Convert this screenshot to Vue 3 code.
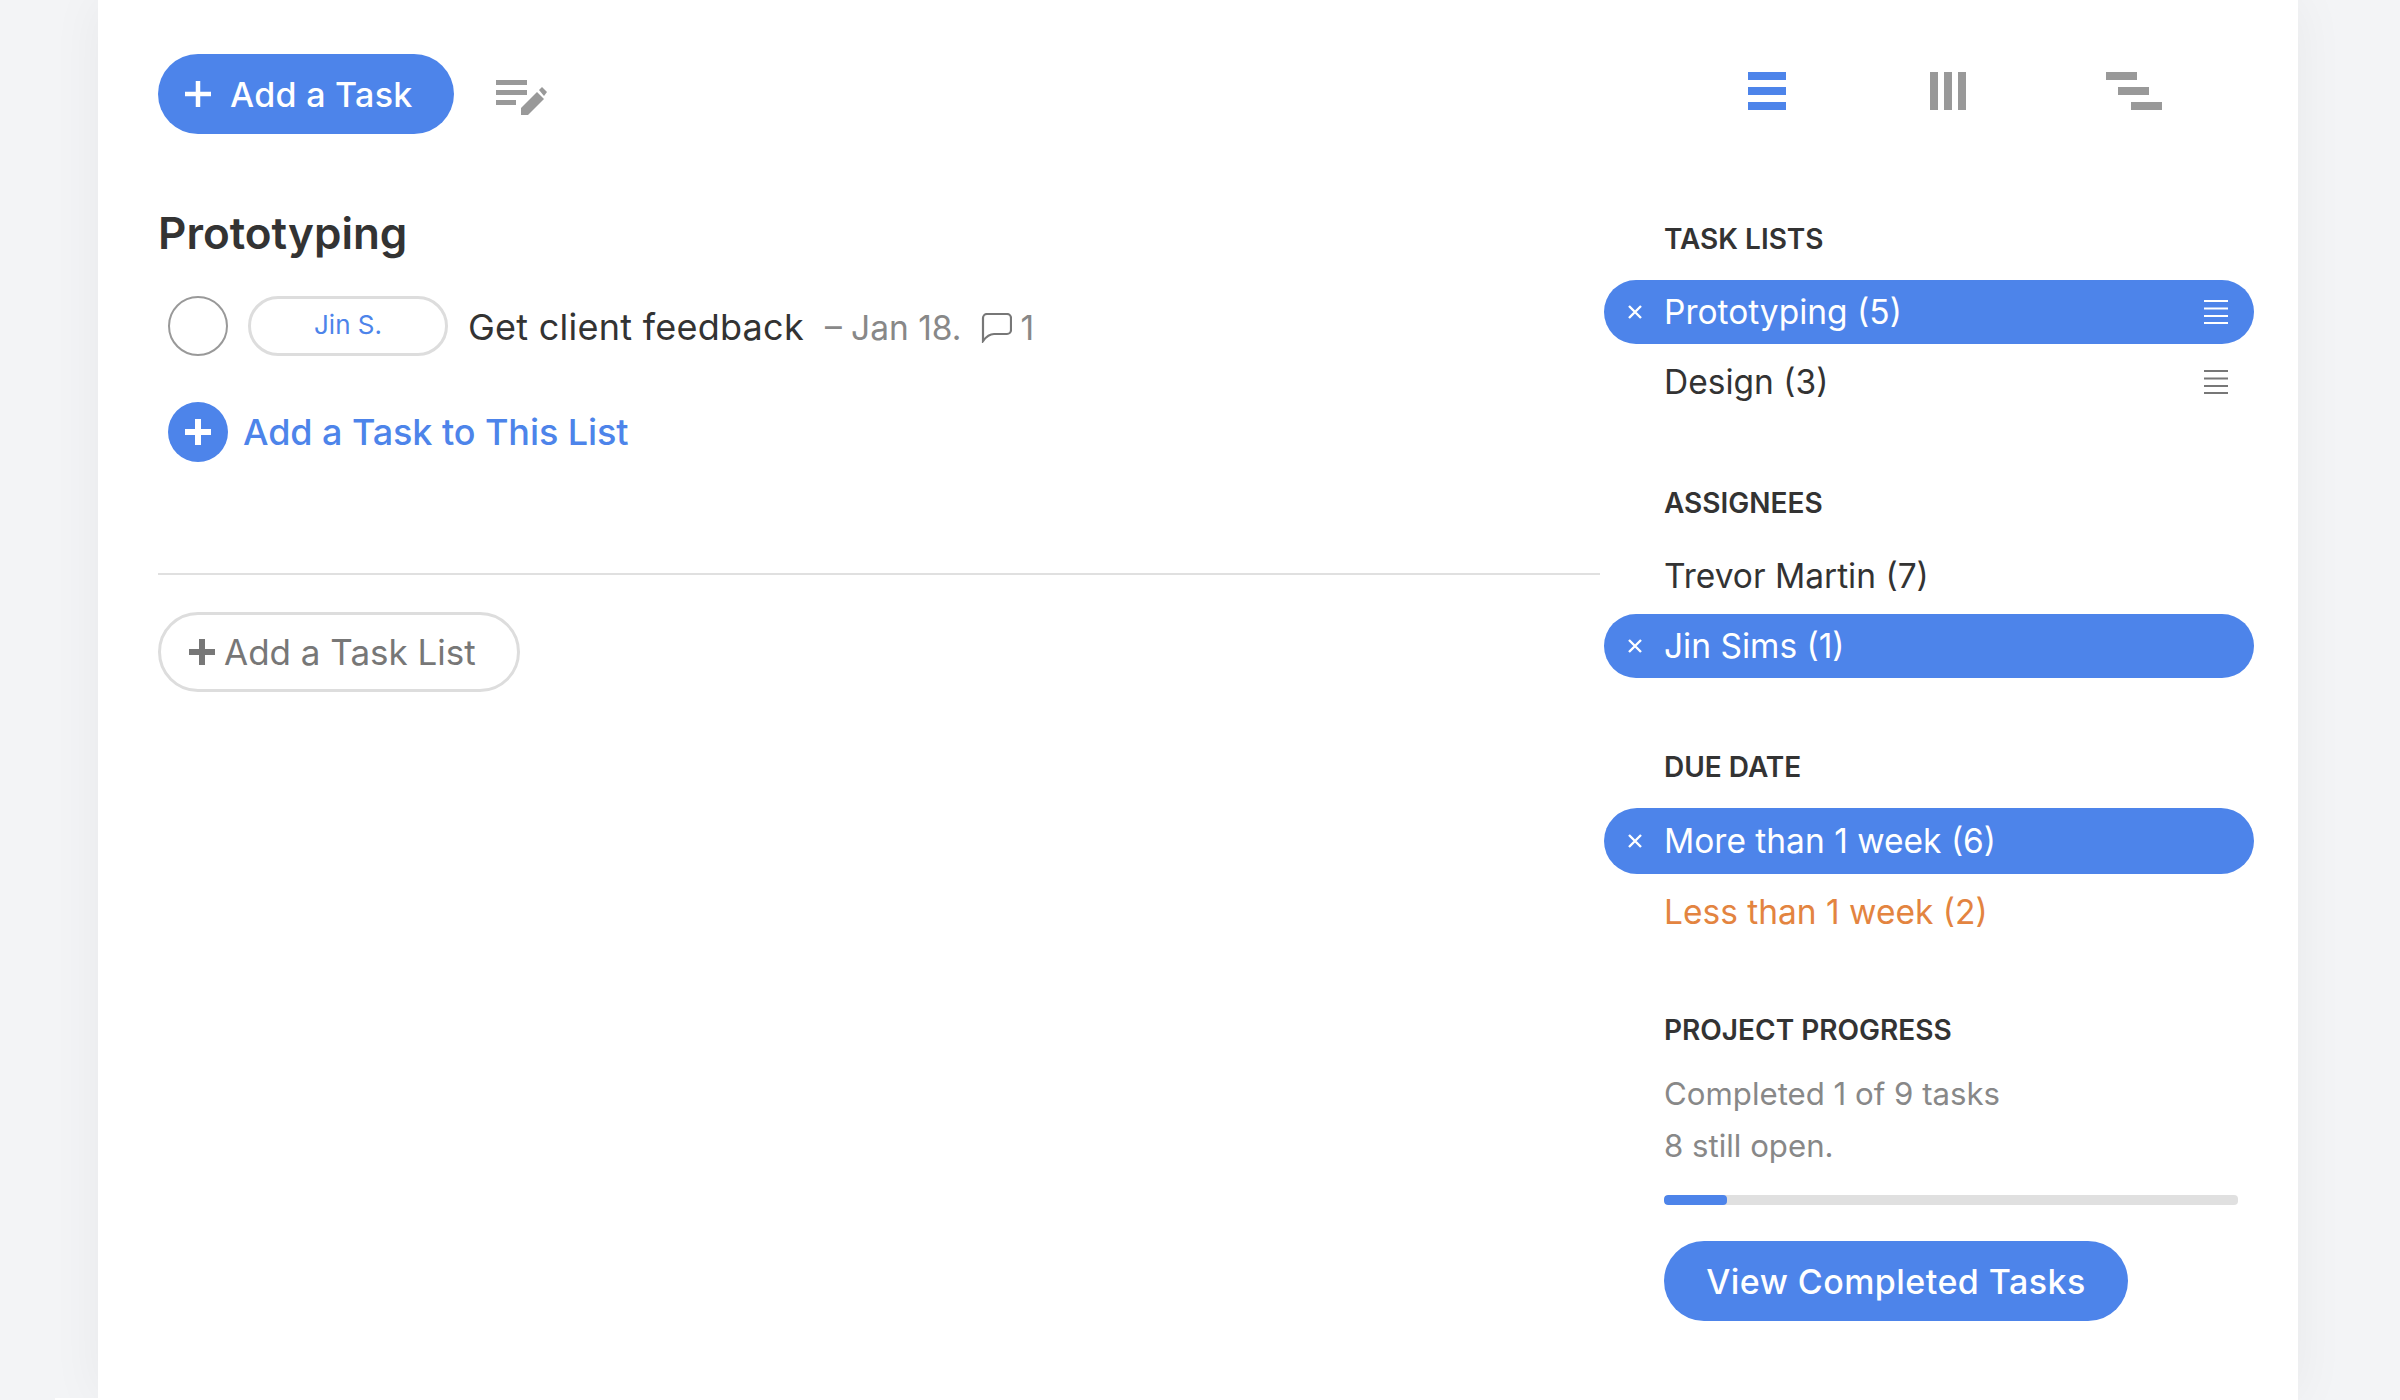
<script setup>
const taskLists = [
  { label: "Prototyping (5)", active: true, lines: true },
  { label: "Design (3)", active: false, lines: true },
];
const assignees = [
  { label: "Trevor Martin (7)", active: false },
  { label: "Jin Sims (1)", active: true },
];
const dueDates = [
  { label: "More than 1 week (6)", active: true, tall: true },
  { label: "Less than 1 week (2)", active: false, warn: true },
];
const sections = [
  { title: "TASK LISTS", rows: taskLists },
  { title: "ASSIGNEES", rows: assignees },
  { title: "DUE DATE", rows: dueDates },
];
const progress = 11;
</script>

<template>
  <div class="page">
    <div class="card">
      <main class="main">
        <div class="toolbar">
          <button class="btn-primary add-task">
            <svg class="btn-plus" width="26" height="26" viewBox="0 0 26 26">
              <path d="M13 0v26M0 13h26" stroke="#fff" stroke-width="4.500" fill="none" />
            </svg>
            <span>Add a Task</span>
          </button>
          <svg class="edit-icon" width="52" height="36" viewBox="0 0 52 36">
            <path d="M0 0h31v5H0zM0 10h31v5H0zM0 20h20v5H0z" fill="#999" />
            <path d="M25 35v-7l16-16 7 7-16 16z" fill="#999" />
            <path d="M43 10l3-3 5 5-3 4z" fill="#999" />
          </svg>
        </div>

        <h2 class="list-title">Prototyping</h2>

        <div class="task">
          <span class="check"></span>
          <span class="assignee">Jin S.</span>
          <span class="task-name">Get client feedback</span>
          <span class="task-date">– Jan 18.</span>
          <svg class="comment-icon" width="31" height="30" viewBox="0 0 31 30">
            <path
              d="M2 27V5a4 4 0 0 1 4-4h20a4 4 0 0 1 4 4v12a4 4 0 0 1-4 4H13c-4 0-8 3-11 7z"
              stroke="#777"
              stroke-width="2.200"
              fill="none"
            />
          </svg>
          <span class="task-count">1</span>
        </div>

        <div class="add-to-list">
          <span class="add-circle">
            <svg width="26" height="26" viewBox="0 0 26 26">
              <path d="M13 0v26M0 13h26" stroke="#fff" stroke-width="6" fill="none" />
            </svg>
          </span>
          <span>Add a Task to This List</span>
        </div>

        <hr class="divider" />

        <button class="add-list">
          <svg width="28" height="28" viewBox="0 0 28 28">
            <path d="M14 1v26M1 14h26" stroke="#777" stroke-width="6" fill="none" />
          </svg>
          <span>Add a Task List</span>
        </button>
      </main>

      <aside class="side">
        <div class="views">
          <svg width="38" height="38" viewBox="0 0 38 38">
            <path d="M0 0h38v8H0zM0 15h38v8H0zM0 30h38v8H0z" fill="#4d84ea" />
          </svg>
          <svg width="36" height="38" viewBox="0 0 36 38">
            <path d="M0 0h8v38H0zM14 0h8v38h-8zM28 0h8v38h-8z" fill="#999" />
          </svg>
          <svg width="56" height="38" viewBox="0 0 56 38">
            <path d="M0 0h31v8H0zM12 15h31v8H12zM25 30h31v8H25z" fill="#999" />
          </svg>
        </div>

        <section v-for="section in sections" :key="section.title" class="section">
          <h3 class="section-title">{{ section.title }}</h3>
          <div class="rows">
            <div
              v-for="row in section.rows"
              :key="row.label"
              class="row"
              :class="{ active: row.active, warn: row.warn, tall: row.tall }"
            >
              <svg v-if="row.active" class="row-x" width="16" height="16" viewBox="0 0 16 16">
                <path d="M2 2l12 12M14 2L2 14" stroke="#fff" stroke-width="2.400" fill="none" />
              </svg>
              <span class="row-label">{{ row.label }}</span>
              <svg v-if="row.lines" class="row-lines" width="24" height="24" viewBox="0 0 24 24">
                <path
                  d="M0 1h24M0 8.500h24M0 16h24M0 23h24"
                  :stroke="row.active ? '#fff' : '#777'"
                  stroke-width="2"
                  fill="none"
                />
              </svg>
            </div>
          </div>
        </section>

        <section class="progress">
          <h3 class="section-title">PROJECT PROGRESS</h3>
          <p class="progress-text">Completed 1 of 9 tasks</p>
          <p class="progress-text">8 still open.</p>
          <div class="bar">
            <div class="bar-fill" :style="{ width: progress + '%' }"></div>
          </div>
          <button class="btn-primary view-completed">View Completed Tasks</button>
        </section>
      </aside>
    </div>
    <div class="next-card"></div>
  </div>
</template>

<style>
html,
body {
  margin: 0;
  background: #f3f4f6;
  overflow: hidden;
}
</style>

<style scoped>
.page {
  height: 1400px;
  overflow: hidden;
  font-family: Inter, "Liberation Sans", sans-serif;
  color: #333;
}

.card {
  box-sizing: border-box;
  display: flex;
  width: 2200px;
  height: 1398px;
  margin-left: 98px;
  background: #fff;
  box-shadow: 0 0 50px rgba(0, 0, 0, 0.05);
}

.next-card {
  width: 2243px;
  height: 2px;
  margin-left: 55px;
  background: #fff;
}

.main {
  width: 1442px;
  margin-left: 60px;
  padding-top: 54px;
}

.toolbar {
  display: flex;
  align-items: center;
  gap: 42px;
}

button {
  font-family: inherit;
  border: none;
  cursor: pointer;
}

.btn-primary {
  background: #4d84ea;
  color: #fff;
  height: 80px;
  border-radius: 40px;
  font-size: 34px;
  font-weight: 500;
}

.add-task {
  display: flex;
  align-items: center;
  gap: 19px;
  width: 296px;
  padding: 0 0 0 27px;
  letter-spacing: 0.3px;
}

.edit-icon {
  margin-top: 7px;
}

.list-title {
  margin: 71px 0 0;
  font-size: 44px;
  line-height: 56px;
  font-weight: 600;
}

.task {
  display: flex;
  align-items: center;
  height: 60px;
  margin-top: 35px;
  padding-left: 10px;
}

.check {
  box-sizing: border-box;
  width: 60px;
  height: 60px;
  border: 2px solid #999;
  border-radius: 50%;
}

.assignee {
  box-sizing: border-box;
  width: 200px;
  height: 60px;
  margin-left: 20px;
  border: 3px solid #ddd;
  border-radius: 30px;
  color: #4d84ea;
  font-size: 26px;
  line-height: 52px;
  text-align: center;
}

.task-name {
  margin-left: 20px;
  margin-top: 1px;
  font-size: 36px;
  letter-spacing: 0.25px;
}

.task-date {
  margin-left: 21px;
  margin-top: 3px;
  color: #888;
  font-size: 33.5px;
}

.comment-icon {
  margin-left: 20px;
  margin-top: 4px;
}

.task-count {
  margin-left: 8px;
  margin-top: 3px;
  color: #888;
  font-size: 33.5px;
}

.add-to-list {
  display: flex;
  align-items: center;
  gap: 15px;
  margin-top: 46px;
  padding-left: 10px;
  color: #4d84ea;
  font-size: 36px;
  font-weight: 500;
  letter-spacing: -0.08px;
}

.add-circle {
  display: flex;
  align-items: center;
  justify-content: center;
  width: 60px;
  height: 60px;
  border-radius: 50%;
  background: #4d84ea;
}

.divider {
  margin: 111px 0 0;
  border: none;
  border-top: 2px solid #e0e0e0;
}

.add-list {
  display: flex;
  align-items: center;
  gap: 8px;
  box-sizing: border-box;
  width: 362px;
  height: 80px;
  margin-top: 37px;
  padding-left: 27px;
  border: 3px solid #ddd;
  border-radius: 40px;
  background: #fff;
  color: #777;
  font-size: 35px;
}

.side {
  width: 650px;
  margin-left: 4px;
}

.views {
  display: flex;
  padding: 72px 0 0 144px;
  gap: 144px;
}

.views svg:nth-child(3) {
  margin-left: -4px;
}

.section {
  margin-top: 112px;
}

.section-title {
  margin: 0;
  padding-left: 60px;
  font-size: 28px;
  line-height: 34px;
  font-weight: 600;
}

.section + .section {
  margin-top: 72px;
}

.rows {
  display: flex;
  flex-direction: column;
  gap: 6px;
  margin-top: 24px;
}

.row {
  position: relative;
  display: flex;
  align-items: center;
  height: 64px;
  padding: 0 26px 0 60px;
  border-radius: 32px;
  font-size: 33.5px;
}

.row.tall {
  height: 66px;
  border-radius: 33px;
}

.row.active {
  background: #4d84ea;
  color: #fff;
}

.row.warn {
  color: #e38440;
}

.row-x {
  position: absolute;
  left: 23px;
}

.row-label {
  flex: 1;
}

.progress {
  margin-top: 69px;
  padding-left: 60px;
}

.progress .section-title {
  padding-left: 0;
}

.progress-text {
  margin: 0;
  color: #888;
  font-size: 31.2px;
  line-height: 52px;
}

.progress-text:first-of-type {
  margin-top: 21px;
}

.bar {
  width: 574px;
  height: 10px;
  margin-top: 23px;
  border-radius: 4px;
  background: #e0e0e0;
  overflow: hidden;
}

.bar-fill {
  height: 100%;
  border-radius: 4px;
  background: #4d84ea;
}

.view-completed {
  display: block;
  width: 464px;
  margin-top: 36px;
  padding: 0;
  letter-spacing: 0.45px;
}
</style>
